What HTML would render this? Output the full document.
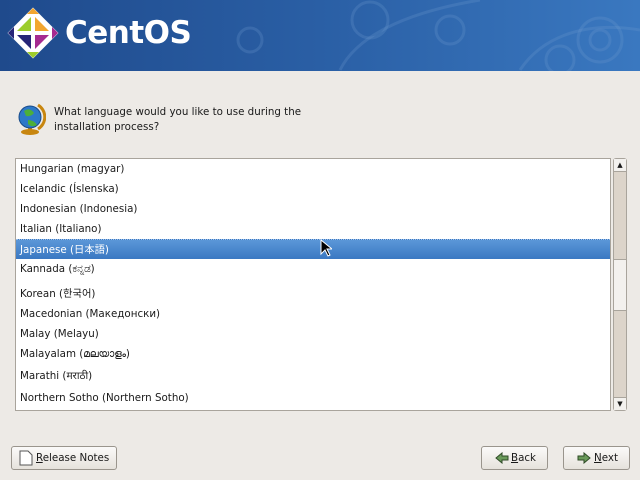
<!DOCTYPE html>
<html><head><style>
body{margin:0;width:640px;height:480px;background:#edeae6;font-family:"DejaVu Sans","Liberation Sans","Noto Sans CJK JP",sans-serif;font-size:10.3px;color:#1a1a1a;position:relative;overflow:hidden}
.hdr{position:absolute;left:0;top:0;width:640px;height:71px;background:linear-gradient(90deg,#1f4a8c 0%,#2a5fa5 50%,#3a78c0 100%)}
.logo{position:absolute;left:65px;top:15px;font-family:"DejaVu Sans","Liberation Sans",sans-serif;font-weight:bold;font-size:31px;color:#fff;letter-spacing:-0.5px}
.q{position:absolute;left:54px;top:105px;line-height:15px;font-size:10.3px}
.list{position:absolute;left:15px;top:158px;width:594px;height:251px;background:#fff;border:1px solid #a9a49c;overflow:hidden}
.row{position:absolute;left:0;width:594px;padding-left:4px;box-sizing:border-box;height:20px;line-height:20px}
.sel{background:linear-gradient(#5b97d8,#3a78c2);color:#fff;border-top:1px dotted #9cc0ea}
.sb{position:absolute;left:613px;top:158px;width:12px;height:251px;background:#dcd4ca;border:1px solid #a9a49c;border-radius:3px}
.thumb{position:absolute;left:0;top:100px;width:12px;height:50px;background:#f3f1ee;border-top:1px solid #a9a49c;border-bottom:1px solid #a9a49c}
.btn{position:absolute;top:446px;height:22px;border:1px solid #9a958d;border-radius:3px;background:linear-gradient(#fbfaf9,#e6e2dc);line-height:22px;font-size:10.3px}
</style></head><body>
<div class="hdr">
<svg width="640" height="71" style="position:absolute;left:0;top:0" fill="none" stroke="#6f9bd0" stroke-opacity=".25" stroke-width="3">
<circle cx="370" cy="20" r="18"/><circle cx="450" cy="30" r="14"/><circle cx="600" cy="40" r="22"/><circle cx="600" cy="40" r="10"/><circle cx="560" cy="60" r="14"/><circle cx="250" cy="40" r="12"/><path d="M340 70 C360 30 420 10 480 0"/><path d="M520 70 C540 40 580 20 640 30"/></svg>
<svg width="54" height="54" viewBox="0 0 54 54" style="position:absolute;left:6px;top:6px">
<g transform="translate(27 27)">
<rect x="-18" y="-18" width="36" height="36" transform="rotate(45)" fill="#fff"/>
<polygon points="-2,-2 -2,-16 -16,-2" fill="#9ccd2b"/>
<polygon points="2,-2 2,-16 16,-2" fill="#f2a630"/>
<polygon points="2,2 2,16 16,2" fill="#a52a90"/>
<polygon points="-2,2 -2,16 -16,2" fill="#262577"/>
<polygon points="0,-25 -6,-19 6,-19" fill="#f2a630"/><polygon points="25,0 19,-6 19,6" fill="#a52a90"/>
<polygon points="0,25 -6,19 6,19" fill="#9ccd2b"/><polygon points="-25,0 -19,-6 -19,6" fill="#262577"/>
</g></svg>
<div class="logo">CentOS</div>
</div>
<svg width="30" height="34" style="position:absolute;left:16px;top:102px"><ellipse cx="14" cy="30" rx="9" ry="3" fill="#c8860f"/><rect x="12" y="24" width="4" height="6" fill="#c8860f"/><circle cx="14" cy="15" r="11" fill="#2d78c8" stroke="#1a4c8a"/><path d="M8 9 q6-4 10 2 q-3 4 -8 3z M12 18 q6 0 9 5 q-5 3 -9-1z" fill="#4caf3a"/><path d="M22 3 a14 14 0 0 1 0 24" stroke="#c8860f" stroke-width="3" fill="none"/></svg>
<div class="q">What language would you like to use during the<br>installation process?</div>
<div class="list">
<div class="row" style="top:0">Hungarian (magyar)</div>
<div class="row" style="top:20px">Icelandic (Íslenska)</div>
<div class="row" style="top:40px">Indonesian (Indonesia)</div>
<div class="row" style="top:60px">Italian (Italiano)</div>
<div class="row sel" style="top:80px">Japanese (日本語)</div>
<div class="row" style="top:100px">Kannada (ಕನ್ನಡ)</div>
<div class="row" style="top:125px">Korean (한국어)</div>
<div class="row" style="top:145px">Macedonian (Македонски)</div>
<div class="row" style="top:165px">Malay (Melayu)</div>
<div class="row" style="top:185px">Malayalam (മലയാളം)</div>
<div class="row" style="top:207px">Marathi (मराठी)</div>
<div class="row" style="top:229px">Northern Sotho (Northern Sotho)</div>
</div>
<div class="sb"><div style="position:absolute;top:0;left:0;width:12px;height:12px;background:#f3f1ee;border-bottom:1px solid #a9a49c;font-size:7px;text-align:center;line-height:12px">▲</div><div class="thumb"></div><div style="position:absolute;bottom:0;left:0;width:12px;height:12px;background:#f3f1ee;border-top:1px solid #a9a49c;font-size:7px;text-align:center;line-height:12px">▼</div></div>
<div class="btn" style="left:11px;width:104px"><svg width="14" height="16" style="position:absolute;left:7px;top:3px"><path d="M1 1h8l4 4v10h-12z" fill="#fff" stroke="#555"/></svg><span style="position:absolute;left:24px"><u>R</u>elease Notes</span></div>
<div class="btn" style="left:481px;width:65px"><svg width="14" height="12" style="position:absolute;left:13px;top:5px"><path d="M1 6l6-5v3h6v4h-6v3z" fill="#6a9a5a" stroke="#2e4a26"/></svg><span style="position:absolute;left:29px"><u>B</u>ack</span></div>
<div class="btn" style="left:563px;width:65px"><svg width="14" height="12" style="position:absolute;left:13px;top:5px"><path d="M13 6l-6-5v3h-6v4h6v3z" fill="#6a9a5a" stroke="#2e4a26"/></svg><span style="position:absolute;left:30px"><u>N</u>ext</span></div>
<svg width="12" height="18" style="position:absolute;left:320px;top:239px"><path d="M1 1v14l4-4 3 6 2-1-3-6h5z" fill="#000" stroke="#fff"/></svg>
</body></html>
